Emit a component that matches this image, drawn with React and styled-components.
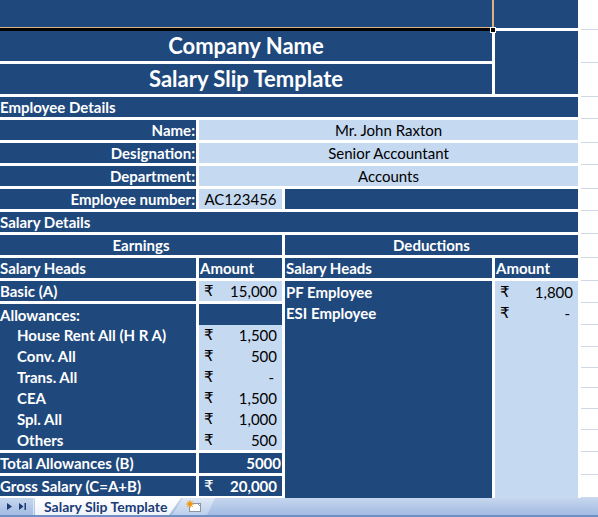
import React from 'react'
import styled, { createGlobalStyle } from 'styled-components'

const NAVY = '#1f497d'
const LIGHT = '#c5d9f1'
const FONT = 'Lato, "Noto Sans", "DejaVu Sans", sans-serif'

const GlobalStyle = createGlobalStyle`
  html, body { margin: 0; padding: 0; background: #fff; }
  body { font-family: ${FONT}; }
  * { box-sizing: border-box; }
`

const Window = styled.div`
  width: 598px;
  height: 517px;
  display: flex;
  flex-direction: column;
  overflow: hidden;
`
const SheetArea = styled.div`
  height: 498px;
  flex: none;
  display: flex;
  overflow: hidden;
`
const Sheet = styled.div`
  width: 578px;
  flex: none;
  display: flex;
  flex-direction: column;
`
const TopStrip = styled.div`
  height: 31px;
  flex: none;
  display: flex;
  position: relative;
`
const TopLeft = styled.div`
  width: 492px;
  background: ${NAVY};
  border-bottom: 3px solid #000;
  box-shadow: inset 0 -1px 0 #dcb283;
`
const TopMark = styled.div`
  width: 3px;
  background: linear-gradient(to right, #dcb283 2px, ${NAVY} 2px);
  border-bottom: 3px solid #fff;
`
const TopRight = styled.div`
  flex: 1;
  background: ${NAVY};
  border-bottom: 3px solid #fff;
`
const Handle = styled.div`
  position: absolute;
  left: 490px;
  top: 27px;
  width: 6px;
  height: 6px;
  background: #000;
  border: 1px solid #fff;
`
const Grid = styled.div`
  flex: none;
  display: grid;
  grid-template-columns: 196px 83px 207px 83px;
  grid-template-rows: 30px 30px repeat(9, 20px) 146px 20px 20px 20px;
  gap: 3px;
  background: #fff;
`
const Cell = styled.div`
  grid-column: ${p => p.$col || 'auto'};
  grid-row: ${p => p.$row || 'auto'};
  background: ${p => (p.$light ? LIGHT : NAVY)};
  color: ${p => (p.$light ? '#000' : '#fff')};
  font-weight: ${p => (p.$light ? 400 : 700)};
  font-size: ${p => p.$size || 15}px;
  line-height: 20px;
  display: flex;
  align-items: center;
  justify-content: ${p => p.$align || 'flex-start'};
  padding: 0 ${p => p.$pad || 0}px;
  white-space: nowrap;
  overflow: hidden;
`
const Stack = styled.div`
  grid-column: ${p => p.$col};
  grid-row: ${p => p.$row};
  background: ${p => (p.$light ? LIGHT : NAVY)};
  display: grid;
  grid-template-rows: ${p => p.$rows};
  align-content: ${p => (p.$fill ? 'stretch' : 'start')};
`
const Line = styled.div`
  display: flex;
  align-items: center;
  justify-content: space-between;
  padding: 0 5px 0 ${p => p.$indent || 0}px;
  background: ${p => (p.$light ? LIGHT : 'transparent')};
  color: ${p => (p.$light ? '#000' : '#fff')};
  font-weight: ${p => (p.$light ? 400 : 700)};
  font-size: 15px;
  line-height: 20px;
  white-space: nowrap;
`
const Rupee = styled.span`
  font-family: "DejaVu Sans", "Noto Sans", sans-serif;
  font-size: 15px;
  font-weight: 400;
`
const Value = styled.span`
  padding-right: ${p => (p.$dash ? 3 : 0)}px;
`
const Gutter = styled.div`
  flex: 1;
  padding-left: 3px;
  display: flex;
  flex-direction: column;
`
const GridLine = styled.div`
  flex: none;
  border-bottom: 1px solid #d0d7e5;
`
const TabBar = styled.div`
  height: 19px;
  flex: none;
  display: flex;
  align-items: stretch;
  background: linear-gradient(#c6d6ee, #a3bce2);
  border-bottom: 2px solid #6f90c4;
`
const NavBox = styled.div`
  width: 34px;
  display: flex;
  align-items: center;
  gap: 7px;
  padding-left: 7px;
  border-right: 1px solid #dbe5f4;
`
const SheetTab = styled.div`
  width: 146px;
  margin-left: 1px;
  padding-left: 9px;
  background: linear-gradient(#ffffff, #eef3fa);
  clip-path: polygon(0 0, 100% 0, calc(100% - 12px) 100%, 0 100%);
  color: #1c3c78;
  font-weight: 700;
  font-size: 14px;
  line-height: 18px;
  white-space: nowrap;
`
const NewTab = styled.div`
  width: 43px;
  margin-left: -9px;
  display: flex;
  align-items: center;
  justify-content: center;
  background: linear-gradient(#dfe8f6, #bccfeb);
  clip-path: polygon(11px 0, 100% 0, calc(100% - 8px) 100%, 0 100%);
`

const gutterRows = [30, 33, 34, 22, 24, 22, 24, 22, 23, 24, 23, 22, 22, 22, 21, 20, 21, 21, 22, 23, 23]

const allowances = [
  ['House Rent All (H R A)', '1,500'],
  ['Conv. All', '500'],
  ['Trans. All', '-'],
  ['CEA', '1,500'],
  ['Spl. All', '1,000'],
  ['Others', '500'],
]

const details = [
  ['Name:', 'Mr. John Raxton'],
  ['Designation:', 'Senior Accountant'],
  ['Department:', 'Accounts'],
]

function Amount({ value, light = true }) {
  return (
    <Line $light={light} $indent={5}>
      <Rupee>₹</Rupee>
      <Value $dash={value === '-'}>{value}</Value>
    </Line>
  )
}

function NavIcons() {
  return (
    <>
      <svg width="5" height="7" viewBox="0 0 5 7"><path d="M0 0 L5 3.5 L0 7 Z" fill="#1c3c78" /></svg>
      <svg width="7" height="7" viewBox="0 0 7 7"><path d="M0 0 L4.5 3.5 L0 7 Z" fill="#1c3c78" /><rect x="5.5" y="0" width="1.5" height="7" fill="#1c3c78" /></svg>
    </>
  )
}

function NewSheetIcon() {
  return (
    <svg width="16" height="13" viewBox="0 0 16 13">
      <rect x="3.5" y="3.5" width="11" height="8" fill="#fff" stroke="#8a96a8" />
      <path d="M11.5 3.5 L14.5 6.5" stroke="#8a96a8" fill="none" />
      <circle cx="4" cy="4" r="2.6" fill="#f5b625" />
      <path d="M4 0 L4 8 M0 4 L8 4 M1.2 1.2 L6.8 6.8 M6.8 1.2 L1.2 6.8" stroke="#f08c1a" strokeWidth="0.8" />
    </svg>
  )
}

export default function App() {
  return (
    <Window>
      <GlobalStyle />
      <SheetArea>
        <Sheet>
          <TopStrip>
            <TopLeft />
            <TopMark />
            <TopRight />
            <Handle />
          </TopStrip>
          <Grid>
            <Cell $col="1 / 4" $row="1" $size={22} $align="center">Company Name</Cell>
            <Cell $col="4" $row="1 / 3" />
            <Cell $col="1 / 4" $row="2" $size={22} $align="center">Salary Slip Template</Cell>
            <Cell $col="1 / 5" $row="3">Employee Details</Cell>

            {details.map(([label, value], i) => (
              <React.Fragment key={label}>
                <Cell $col="1" $row={4 + i} $align="flex-end" $pad={1}>{label}</Cell>
                <Cell $col="2 / 5" $row={4 + i} $light $align="center">{value}</Cell>
              </React.Fragment>
            ))}
            <Cell $col="1" $row="7" $align="flex-end" $pad={1}>Employee number:</Cell>
            <Cell $col="2" $row="7" $light $align="center">AC123456</Cell>
            <Cell $col="3 / 5" $row="7" />

            <Cell $col="1 / 5" $row="8">Salary Details</Cell>
            <Cell $col="1 / 3" $row="9" $align="center">Earnings</Cell>
            <Cell $col="3 / 5" $row="9" $align="center">Deductions</Cell>

            <Cell $col="1" $row="10">Salary Heads</Cell>
            <Cell $col="2" $row="10" $pad={1}>Amount</Cell>
            <Cell $col="3" $row="10" $pad={1}>Salary Heads</Cell>
            <Cell $col="4" $row="10" $pad={1}>Amount</Cell>

            <Cell $col="1" $row="11">Basic (A)</Cell>
            <Stack $col="2" $row="11" $light $rows="20px">
              <Amount value="15,000" />
            </Stack>

            <Stack $col="3" $row="11 / 16" $rows="21px 21px">
              <Line $indent={1}>PF Employee</Line>
              <Line $indent={1}>ESI Employee</Line>
            </Stack>
            <Stack $col="4" $row="11 / 16" $light $rows="21px 21px">
              <Amount value="1,800" />
              <Amount value="-" />
            </Stack>

            <Stack $col="1" $row="12" $rows="21px repeat(6, 1fr)" $fill>
              <Line>Allowances:</Line>
              {allowances.map(([label]) => (
                <Line key={label} $indent={17}>{label}</Line>
              ))}
            </Stack>
            <Stack $col="2" $row="12" $rows="21px repeat(6, 1fr)" $fill>
              <Line />
              {allowances.map(([label, value]) => (
                <Amount key={label} value={value} />
              ))}
            </Stack>

            <Cell $col="1" $row="13">Total Allowances (B)</Cell>
            <Cell $col="2" $row="13" $align="flex-end" $pad={1}>5000</Cell>
            <Cell $col="1" $row="14">Gross Salary (C=A+B)</Cell>
            <Stack $col="2" $row="14" $rows="20px">
              <Line $indent={5}>
                <Rupee>₹</Rupee>
                <span>20,000</span>
              </Line>
            </Stack>
          </Grid>
        </Sheet>
        <Gutter>
          {gutterRows.map((h, i) => (
            <GridLine key={i} style={{ height: h }} />
          ))}
        </Gutter>
      </SheetArea>
      <TabBar>
        <NavBox>
          <NavIcons />
        </NavBox>
        <SheetTab>Salary Slip Template</SheetTab>
        <NewTab>
          <NewSheetIcon />
        </NewTab>
      </TabBar>
    </Window>
  )
}
